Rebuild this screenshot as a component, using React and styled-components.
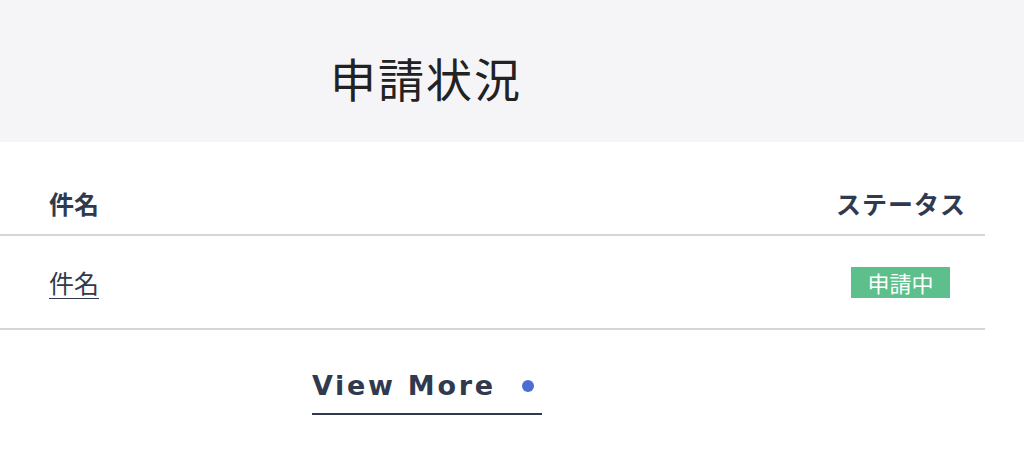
import styled, { createGlobalStyle } from "styled-components";

const GlobalStyle = createGlobalStyle`
  html, body { margin: 0; padding: 0; background: #ffffff; }
  body {
    font-family: "Lato", "Noto Sans CJK JP", sans-serif;
    color: #2f3a4f;
  }
`;

const Page = styled.div`
  width: 1024px;
  height: 454px;
  overflow: hidden;
  background: #ffffff;
`;

const Header = styled.header`
  height: 142px;
  background: #f5f5f7;
  display: flex;
  align-items: center;
  padding-left: 330px;
  box-sizing: border-box;
`;

const Title = styled.h1`
  margin: 0;
  font-family: "Noto Sans CJK JP", sans-serif;
  font-weight: 400;
  font-size: 46px;
  letter-spacing: 2px;
  color: #222;
  padding-top: 12px;
`;

const Table = styled.div`
  width: 985px;
  margin-top: 24px;
`;

const Row = styled.div`
  display: flex;
  align-items: center;
  justify-content: space-between;
  height: ${(p) => p.$h}px;
  padding: 0 19px 0 49px;
  border-bottom: 2px solid #d6d6d6;
  box-sizing: border-box;
`;

const HeadCell = styled.span`
  font-family: "Noto Sans CJK JP", sans-serif;
  font-weight: 700;
  font-size: 25px;
  line-height: 1;
  letter-spacing: ${(p) => p.$ls || 0}px;
  color: #2f3a4f;
  padding-top: ${(p) => p.$pt || 0}px;
`;

const LinkCell = styled.a`
  font-family: "Noto Sans CJK JP", sans-serif;
  font-size: 25px;
  line-height: 1;
  color: #2f3a4f;
  text-decoration: underline;
  text-underline-offset: 5px;
  text-decoration-thickness: 1px;
`;

const Badge = styled.span`
  display: inline-flex;
  align-items: center;
  justify-content: center;
  width: 99px;
  height: 31px;
  margin-right: 16px;
  background: #5dbf8c;
  color: #ffffff;
  font-family: "Noto Sans CJK JP", sans-serif;
  font-size: 22px;
  line-height: 1;
`;

const MoreWrap = styled.div`
  display: flex;
  padding-left: 312px;
  padding-top: 40px;
`;

const MoreLink = styled.a`
  display: flex;
  align-items: center;
  gap: 26px;
  width: 230px;
  padding-bottom: 11px;
  border-bottom: 2px solid #2f3a4f;
  color: #2f3a4f;
  text-decoration: none;
  font-family: "DejaVu Sans", sans-serif;
  font-weight: 700;
  font-size: 27px;
  line-height: 32px;
  letter-spacing: 2.7px;
`;

const Dot = styled.span`
  width: 12px;
  height: 12px;
  border-radius: 50%;
  background: #4a6fd1;
`;

export default function App() {
  return (
    <Page>
      <GlobalStyle />
      <Header>
        <Title>申請状況</Title>
      </Header>
      <Table>
        <Row $h={70}>
          <HeadCell $pt={6}>件名</HeadCell>
          <HeadCell $pt={6} $ls={1}>ステータス</HeadCell>
        </Row>
        <Row $h={94}>
          <LinkCell href="#">件名</LinkCell>
          <Badge>申請中</Badge>
        </Row>
      </Table>
      <MoreWrap>
        <MoreLink href="#">
          View More
          <Dot />
        </MoreLink>
      </MoreWrap>
    </Page>
  );
}
